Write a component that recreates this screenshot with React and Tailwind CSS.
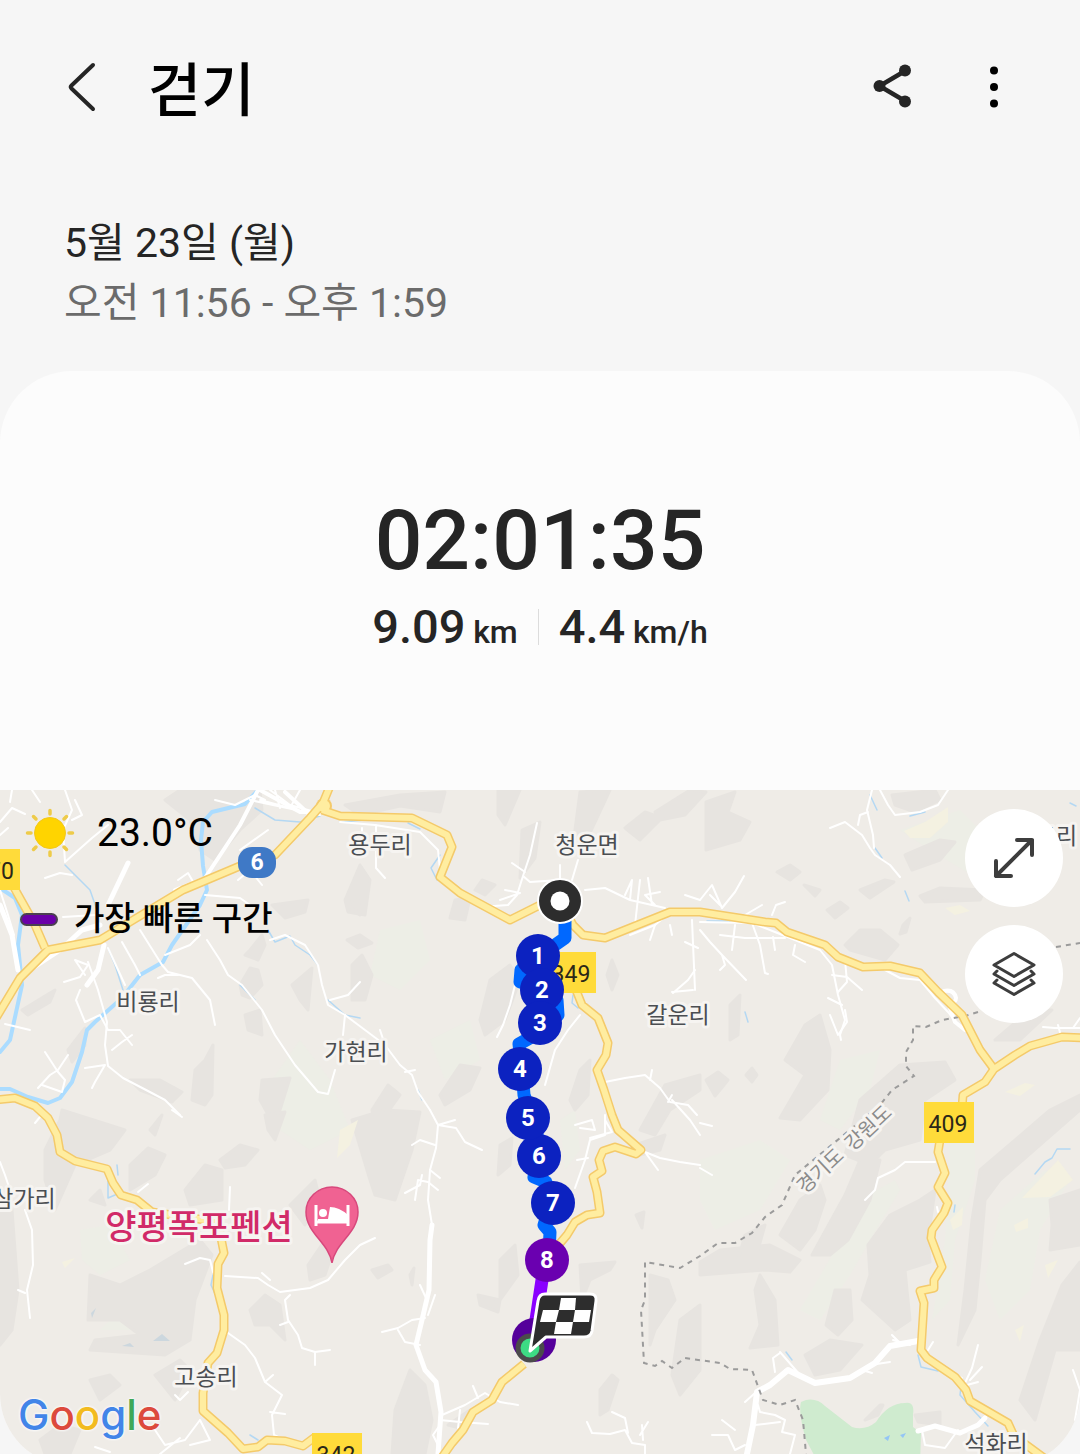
import React from 'react';

const checkpoints = [
  { label: '8', x: 547, y: 1260, fill: '#6a00b0' },
  { label: '7', x: 553, y: 1203, fill: '#0c22c0' },
  { label: '6', x: 539, y: 1156, fill: '#0c22c0' },
  { label: '5', x: 528, y: 1118, fill: '#0c22c0' },
  { label: '4', x: 520, y: 1069, fill: '#0c22c0' },
  { label: '1', x: 538, y: 956, fill: '#0c22c0' },
  { label: '2', x: 542, y: 990, fill: '#0c22c0' },
  { label: '3', x: 540, y: 1023, fill: '#0c22c0' },
];

const villages = [
  { name: '용두리', x: 380, y: 853 },
  { name: '청운면', x: 587, y: 853 },
  { name: '비룡리', x: 148, y: 1010 },
  { name: '가현리', x: 356, y: 1060 },
  { name: '갈운리', x: 678, y: 1023 },
  { name: '삼가리', x: 24, y: 1207 },
  { name: '고송리', x: 206, y: 1385 },
  { name: '석화리', x: 996, y: 1452 },
  { name: '교리', x: 1056, y: 844 },
];

const shields = [
  { label: '70', x: -30, y: 849, tx: 1 },
  { label: '349', x: 546, y: 952, tx: 571 },
  { label: '409', x: 924, y: 1102, tx: 948 },
  { label: '342', x: 312, y: 1433, tx: 336 },
];

// Hill shading, darker side of the slopes
const hills = [
  'M165 800 L180 790 L260 790 L262 810 L240 830 L215 860 L200 850 L190 820 Z',
  'M345 805 L400 795 L445 792 L440 812 L400 806 L360 815 Z',
  'M498 790 L520 790 L505 825 L498 815 Z',
  'M522 830 L540 822 L535 858 L520 878 Z',
  'M580 792 L610 790 L582 850 L575 830 Z',
  'M625 828 L645 812 L662 818 L640 840 Z M655 812 L690 790 L706 792 L685 815 L660 820 Z',
  'M706 802 L735 792 L728 812 L750 822 L740 840 L706 850 Z',
  'M892 795 L935 790 L940 800 L915 812 L895 805 Z',
  'M905 855 L940 840 L955 842 L940 860 L912 870 Z M860 890 L885 880 L894 882 L870 898 Z',
  'M920 896 L940 888 L985 890 L980 900 L925 902 Z',
  'M845 945 L860 930 L880 930 L898 945 L885 960 L850 950 Z M903 925 L910 918 L906 932 L900 934 Z',
  'M777 872 L790 865 L800 872 L790 880 Z M827 910 L840 902 L848 908 L835 918 Z M804 885 L820 890 L815 896 Z',
  'M730 1005 L740 995 L738 1035 L730 1040 Z M785 1060 L805 1025 L820 1015 L830 1050 L828 1090 L800 1120 L780 1118 L805 1075 Z',
  'M706 1080 L718 1072 L728 1080 L715 1096 Z M746 1075 L752 1068 L757 1075 L752 1082 Z',
  'M845 1155 L860 1100 L900 1065 L945 1062 L955 1080 L925 1100 L920 1140 L885 1150 L870 1165 Z',
  'M995 1040 L1030 1010 L1052 1010 L1020 1040 Z M1050 1110 L1080 1095 L1080 1110 L1000 1180 L985 1200 L980 1260 L975 1310 L958 1345 L965 1290 L972 1220 L980 1170 Z',
  'M868 1245 L890 1215 L920 1200 L935 1190 L928 1240 L930 1262 L905 1270 L910 1320 L895 1330 L862 1300 L870 1275 Z',
  'M812 1255 L845 1195 L860 1160 L880 1160 L870 1200 L848 1240 L830 1255 Z',
  'M835 1290 L850 1290 L852 1320 L838 1335 L826 1325 Z M805 1355 L830 1340 L862 1345 L840 1370 L815 1375 Z',
  'M755 1290 L760 1275 L775 1300 L778 1345 L750 1348 L760 1325 Z M700 1262 L720 1250 L770 1245 L800 1260 L790 1272 L765 1270 L700 1275 Z',
  'M780 1235 L800 1200 L820 1185 L825 1200 L815 1230 L800 1250 Z M738 1260 L745 1235 L765 1225 L758 1250 Z',
  'M1050 1200 L1080 1190 L1080 1245 L1050 1250 L1052 1225 Z M1062 1285 L1080 1262 L1080 1350 L1055 1350 L1035 1420 L1020 1400 L1040 1340 Z',
  'M865 1420 L880 1405 L883 1405 L878 1415 Z M915 1415 L940 1412 L940 1425 L918 1422 Z',
  'M650 1275 L668 1280 L675 1300 L655 1330 L650 1345 Z M680 1320 L700 1305 L700 1370 L680 1395 L672 1375 Z',
  'M600 1390 L612 1375 L618 1380 L608 1410 L600 1415 Z M580 1265 L615 1262 L610 1270 L590 1280 L582 1300 Z',
  'M500 1260 L515 1245 L518 1275 L500 1300 Z M478 1295 L500 1300 L498 1312 L480 1305 Z M636 1215 L644 1212 L642 1228 Z',
  'M500 1145 L512 1138 L510 1165 L498 1175 Z M635 1145 L665 1135 L660 1150 L640 1155 Z',
  'M480 1020 L490 980 L510 965 L520 980 L505 1020 L485 1035 Z M440 1095 L460 1065 L480 1068 L470 1090 L445 1105 Z',
  'M345 900 L360 865 L370 880 L365 915 L348 912 Z M347 940 L360 935 L372 943 L358 948 Z M352 965 L362 955 L372 975 L365 1000 L352 1000 Z',
  'M570 1100 L580 1070 L590 1060 L588 1095 L575 1110 Z M607 975 L612 960 L618 975 L612 990 Z M475 890 L482 880 L495 885 L485 895 Z',
  'M455 900 L470 898 L465 920 L450 918 Z M372 1110 L388 1085 L400 1095 L375 1130 Z',
  'M640 1130 L665 1085 L700 1075 L700 1090 L670 1110 L655 1135 Z',
  'M250 950 L262 935 L265 945 L258 960 L245 955 Z M272 905 L308 900 L305 912 L285 918 Z M348 905 L358 895 L360 915 Z',
  'M240 985 L250 968 L258 970 L262 985 L250 998 L242 995 Z M292 985 L312 968 L308 1010 L300 1000 Z M245 1015 L260 1010 L262 1035 L248 1030 Z',
  'M205 1060 L213 1045 L212 1095 L205 1105 L192 1100 L195 1070 Z M262 1080 L290 1078 L280 1110 L270 1118 L260 1100 Z',
  'M22 1010 L55 990 L50 1002 L28 1015 Z M68 1050 L85 1028 L85 1045 L72 1062 Z M130 1080 L160 1080 L182 1092 L172 1102 L140 1090 Z',
  'M45 1150 L60 1120 L62 1110 L125 1130 L110 1150 L75 1165 L55 1210 L45 1180 Z',
  'M130 1165 L148 1148 L165 1155 L155 1175 L130 1190 Z M185 1190 L205 1165 L222 1170 L222 1200 L190 1205 Z M150 1130 L162 1115 L155 1135 Z',
  'M220 1160 L240 1145 L258 1150 L245 1165 L225 1168 Z M265 1115 L285 1112 L275 1140 L268 1130 Z M290 1205 L315 1180 L320 1200 L305 1225 Z',
  'M88 1320 L90 1275 L120 1285 L150 1270 L200 1240 L212 1255 L195 1300 L190 1340 L165 1355 L90 1350 L95 1340 L140 1335 L120 1320 Z',
  'M0 1195 L12 1210 L18 1290 L12 1330 L0 1345 Z M90 1380 L110 1375 L120 1385 L100 1400 Z M155 1375 L180 1360 L190 1370 L175 1400 Z',
  'M250 1310 L265 1295 L280 1305 L285 1340 L270 1325 L255 1325 Z M308 1265 L325 1240 L335 1245 L325 1275 L310 1280 Z',
  'M370 1180 L352 1120 L385 1110 L420 1112 L412 1150 L395 1200 L375 1195 Z M372 1270 L388 1265 L392 1270 L378 1278 Z',
  'M395 1410 L410 1370 L425 1385 L432 1420 L425 1454 L392 1454 Z M410 1275 L414 1268 L412 1285 Z M448 1425 L470 1410 L460 1428 Z',
  'M40 1440 L60 1425 L80 1430 L70 1454 L45 1454 Z M90 1200 L100 1190 L105 1205 Z',
];

// Open ground between the hills
const meadows = [
  'M380 930 L420 920 L430 960 L400 990 L370 975 Z',
  'M430 1040 L470 1020 L480 1060 L445 1080 Z',
  'M265 1090 L300 1040 L330 1080 L350 1130 L310 1150 L280 1130 Z',
  'M100 1330 L130 1300 L190 1270 L175 1310 L140 1330 Z',
  'M80 1230 L110 1225 L130 1260 L100 1275 L82 1260 Z',
  'M700 1160 L760 1140 L790 1160 L760 1210 L715 1230 L700 1200 Z',
  'M835 1250 L860 1200 L895 1180 L900 1190 L870 1240 L850 1275 L820 1320 L800 1310 Z',
  'M1000 1210 L1045 1170 L1070 1180 L1040 1230 L1030 1290 L1000 1320 L985 1280 Z',
  'M900 830 L960 810 L1000 850 L980 880 L930 850 Z',
  'M820 1120 L840 1060 L880 1050 L870 1090 L840 1130 Z',
  'M950 1140 L975 1130 L975 1180 L955 1240 L950 1300 L932 1320 L945 1240 Z',
  'M560 1120 L575 1110 L580 1150 L565 1170 Z',
];

const fields = [
  'M904 831 L925 822 L948 807 L948 822 L930 838 L910 838 Z',
  'M945 908 L960 905 L970 911 L955 915 Z',
  'M1022 1198 L1058 1160 L1073 1180 L1050 1197 Z',
  'M1005 1092 L1025 1083 L1035 1085 L1020 1096 Z',
  'M1014 1225 L1028 1218 L1028 1228 L1016 1232 Z M1045 1265 L1058 1260 L1048 1278 Z M1015 1330 L1024 1325 L1020 1342 Z',
  'M950 1220 L963 1207 L962 1225 L953 1230 Z M340 1130 L358 1120 L350 1145 L337 1158 Z M62 1262 L75 1258 L65 1268 Z',
];

const rivers = [
  'M258 790 L245 804 L212 812 L203 822 L201 840 L203 866 L207 890 L200 905 L172 945 L163 962 L140 975 L122 998 L95 1022 L87 1030 L82 1052 L72 1082 L60 1098 L48 1103 L28 1097 L10 1089 L0 1089',
  'M0 888 L15 898 L22 915 L18 945 L22 985 L10 1040 L0 1052',
];

const streams = [
  'M255 808 L275 820 L300 822 L320 816 M340 822 L365 820',
  'M65 865 L90 890 L97 910 M108 948 L115 965 L123 990',
  'M268 930 L275 942 L290 936 L295 945 L310 955 L318 965',
  'M240 985 L255 1000 M328 1000 L345 1015 L360 1018',
  'M408 823 L420 829 M440 855 L431 868 L437 880',
  'M870 795 L877 810 M875 848 L882 858 M905 891 L909 901 M910 816 L925 812 M1070 803 L1076 806',
  'M707 921 L730 921 M745 1012 L748 1022 M573 995 L572 1003 L578 1008',
  'M1035 1174 L1045 1162 L1052 1158 L1057 1149 L1070 1149 M955 1205 L954 1212',
  'M918 1355 L921 1367 L938 1371 M962 1378 L960 1395 L975 1412 L988 1426 M786 1352 L792 1360',
  'M108 1180 L108 1198 L122 1192 L128 1195 M117 1165 L118 1175 M213 1275 L211 1285 L217 1298',
  'M418 1090 L422 1100 M250 1435 L258 1440',
];

// Local roads
const lanes = [
  'M65 790 L72 810 L63 830 L65 862 M65 862 L92 838 L108 825 M75 800 L82 815 L72 820 M0 835 L8 828 M0 822 L12 808 L25 814 M12 790 L10 802',
  'M45 878 L60 873 L72 875 M32 790 L40 802 M95 915 L63 917 M0 890 L8 915 L14 935',
  'M88 962 L98 990 L107 1022 L105 1045 L108 1066 L123 1078 L148 1091 L165 1100 L180 1115',
  'M64 982 L80 977 L88 965 L75 960 L85 975 M80 990 L76 1000 L85 1022 L100 1015 L108 1030 L120 1030 L132 1045 M112 1050 L122 1042 L132 1035',
  'M108 948 L125 985 M122 942 L135 965 L140 975 M140 930 L162 965 L168 972 L192 978 L210 1000 L215 1025',
  'M158 978 L165 975 L178 975 M45 1052 L58 1072 L65 1080 L62 1092 L42 1085 M38 1088 L50 1075 L58 1070 L68 1055',
  'M85 1068 L105 1065 L95 1082 L92 1088 M30 1030 L5 1024',
  'M165 955 L190 945 L200 935 M207 940 L220 960 L228 975 L242 985 L262 1010 L275 1035 L295 1065 L318 1092 L328 1094 L335 1070',
  'M178 880 L188 873 L195 885 M205 895 L240 898 L250 905 M238 880 L250 870 L262 885 M240 850 L268 830',
  'M270 940 L285 935 L305 945 L318 965 L322 985 L328 1005 L345 1015 L365 1030 L385 1045 L400 1065 L412 1075 L418 1092 L430 1110',
  'M345 1015 L343 1035 M330 1000 L348 995 L360 982 M385 1045 L380 1030 M405 1072 L415 1070',
  'M215 800 L235 805 L255 795 L265 800 M270 790 L290 805 L315 812 M260 800 L290 808 L300 790 M275 790 L280 808 M250 800 L320 815',
  'M340 822 L375 825 L420 832 L438 850 L440 870 M376 825 L376 868 L385 878 M362 840 L362 828',
  'M537 823 L530 855 L523 876 L530 882 L560 880 M512 863 L525 872 M523 876 L517 895 L508 905 L480 907 M505 890 L520 893 L500 900 M560 880 L560 865 M572 880 L578 860',
  'M585 890 L605 888 L630 900 L665 908 M630 900 L632 880 L625 895 M640 880 L635 925 M648 878 L652 905 M655 905 L645 895 L660 892 M685 895 L700 900',
  'M700 900 L712 885 L722 908 L735 892 L744 876 M720 905 L710 895 M745 915 L762 905 M772 915 L776 905 L785 902 M667 915 L655 925 L650 940',
  'M655 925 L630 935 M670 925 L672 935 M692 920 L695 990 M685 942 L698 948 M700 922 L752 923 L785 936 L820 950 L832 965 L838 995 L845 1020 L840 1035 L841 1040',
  'M752 923 L760 945 L765 973 L768 974 M735 925 L732 950 M720 935 L745 938 L785 938 M773 937 L775 950 M795 945 L793 955 L805 962',
  'M700 930 L710 942 L722 955 L725 965 L720 970 M722 955 L746 980 M832 975 L847 977 L862 990 M845 960 L847 982 L838 992 M842 1005 L828 998 M845 1010 L847 1022 L838 1035 L830 1015',
  'M830 828 L845 822 L862 835 L870 848 L875 855 L890 865 L900 877 M872 790 L867 810 L873 835 L874 848 M858 825 L860 815 L868 812',
  'M880 790 L888 805 L895 815 L920 812 L938 805 L948 790',
  'M885 970 L900 978 L920 980 L935 998 L948 1012 L958 1025 L975 1035',
  'M515 985 L510 1005 L503 1025 L497 1037 M580 1015 L568 1030 L555 1050 L545 1085 M693 990 L672 992 M695 970 L688 980 L673 993',
  'M605 1082 L625 1078 L645 1075 L660 1088 L670 1102 L688 1105 L697 1115 M668 1102 L672 1095 M650 1080 L652 1070',
  'M645 1152 L660 1158 L680 1162 L700 1165 M645 1152 L658 1170 M672 1100 L690 1120 L700 1135 M605 1115 L605 1135 L590 1140 L585 1160 L575 1188',
  'M575 1125 L592 1120 L595 1130 L580 1128 M605 1120 L612 1132 L590 1138 M577 1160 L588 1158',
  'M430 1110 L438 1125 L455 1120 M438 1125 L456 1128 L465 1142 L482 1150 M438 1125 L436 1148 L430 1170 L428 1200 L432 1225 M435 1145 L420 1140 L412 1145',
  'M405 1193 L420 1185 L422 1175 M415 1200 L418 1180 L428 1182 L438 1190 M430 1170 L440 1178 M382 1332 L398 1328 L412 1320 L425 1318 M420 1345 L405 1342 L398 1330 M428 1315 L435 1295 M420 1285 L426 1298',
  'M442 1415 L465 1405 L485 1393 L500 1402 L518 1405 M478 1398 L473 1386 M440 1420 L460 1422 L488 1424 M460 1410 L458 1428 M440 1425 L433 1435 L438 1445',
  'M0 1162 L5 1175 L10 1190 M25 1210 L32 1230 L33 1265 L27 1290 L30 1318 M25 1293 L18 1290',
  'M185 1264 L200 1258 L210 1260 L213 1272 M225 1276 L258 1278 L268 1285 L280 1292 L310 1288 L328 1280 L345 1260 L360 1245 L375 1238 M262 1273 L270 1280',
  'M290 1295 L285 1300 L288 1320 L298 1335 L302 1348 L315 1352 L315 1365 M315 1352 L330 1350 M280 1325 L288 1322 M228 1333 L245 1345 L255 1358 L265 1382 L282 1395 L272 1415 L274 1435 L295 1445 M270 1412 L285 1414 M265 1382 L273 1375',
  'M175 1395 L180 1400 L188 1392 M200 1420 L185 1440 L165 1445 L155 1430 M200 1420 L210 1440 L190 1445 M95 1447 L110 1452 M160 1454 L180 1438',
  'M230 1187 L229 1210 M138 1192 L148 1184 M172 1110 L182 1117 M35 1123 L40 1117',
  'M935 1162 L905 1162 L895 1170 L878 1178 L875 1190 L865 1200 M937 1207 L938 1212 M910 1345 L893 1340 M902 1345 L892 1335 M928 1350 L933 1342',
  'M965 1383 L972 1368 L978 1345 M970 1380 L982 1367 M967 1385 L978 1382 M948 1372 L962 1378 M775 1372 L773 1358 L780 1353 M785 1370 L800 1375 L780 1352',
  'M745 1402 L755 1393 M758 1405 L760 1412 L775 1415 L785 1420 L782 1432 L795 1435 L790 1454 M755 1425 L780 1422 M712 1435 L728 1435 L735 1450 L745 1445 M722 1420 L735 1430',
  'M870 1365 L890 1362 M862 1370 L872 1373 M587 1422 L592 1433 L610 1434 L625 1430 L632 1443 L645 1445 L645 1454 M628 1433 L625 1418 L612 1412 M640 1435 L648 1422 M643 1440 L642 1425',
  'M1043 1027 L1055 1028 L1080 1028 M1058 1025 L1062 1040 M1073 1028 L1080 1018 M700 1123 L712 1126 M700 1168 L712 1175 M1073 1370 L1080 1390 L1075 1420',
  'M922 1430 L925 1445 L945 1448 L958 1430',
];

const streets = [
  { d: 'M258 790 L240 825 L205 878 L175 890', w: 4 },
  { d: 'M128 863 L108 905 M100 925 L82 930 L60 950 L22 975', w: 5 },
  { d: 'M0 905 L12 935 L18 970', w: 5 },
  { d: 'M104 945 L98 970 L87 985', w: 5 },
  { d: 'M260 790 L300 812 L320 812 M285 792 L310 815', w: 4 },
  { d: 'M432 1225 L430 1240 L429 1290 L422 1320 L416 1345 L425 1370 L436 1382 L441 1412 L438 1454', w: 5 },
  { d: 'M918 1341 L890 1346 L875 1363 L850 1378 L815 1383 L788 1370 L770 1385 L757 1392 L753 1425 L747 1454', w: 6 },
  { d: 'M918 1431 L935 1426 L960 1433 L978 1425 L985 1418', w: 5 },
  { d: 'M944 991 Q954 989 956 998 Q956 1003 950 1002 M950 1008 L955 1022 L965 1030', w: 4 },
];

const highways = [
  'M-4 1018 L20 978 L48 950 L100 940 L183 890 L240 866 L275 855 L310 818 L323 803 L330 786',
  'M5 870 L17 893 L35 925 L45 948',
  'M322 810 L340 816 L412 818 L447 835 L452 847 L440 877 L460 893 L510 920 L540 905 L562 905 L573 925 L583 935 L605 938 L670 912 L700 912 L765 922 L776 923 L787 932 L825 945 L838 957 L863 967 L890 966 L920 973 L938 992 L962 1015 L980 1050 L994 1069',
  'M1084 1038 L1062 1037 L1030 1046 L1015 1055 L994 1069 L985 1082 L963 1095 L962 1108',
  'M940 1140 L938 1152 L945 1173 L938 1187 L948 1203 L944 1213 L932 1230 L931 1238 L942 1267 L934 1280 L934 1288 L920 1291 L924 1303 L921 1350 L927 1358 L955 1377 L966 1390 L970 1401 L1008 1423 L1014 1436 L1044 1458',
  'M-4 1100 L15 1098 L35 1106 L48 1118 L57 1135 L60 1152 L75 1161 L107 1169 L113 1183 L121 1195 L137 1200 L152 1212 L218 1222 L222 1243 L224 1253 L218 1264 L217 1288 L224 1315 L224 1330 L217 1353 L208 1363 L203 1393 L203 1411 L228 1433 L243 1449 L258 1447 L267 1440 L285 1441 L303 1446 L315 1437',
  'M576 990 L582 1005 L598 1018 L608 1043 L606 1055 L597 1070 L604 1090 L612 1115 L618 1130 L641 1150 L636 1154 L615 1147 L603 1151 L599 1160 L602 1171 L593 1177 L597 1192 L600 1213 L587 1215 L575 1222 L567 1235 L550 1255',
  'M524 1364 L502 1382 L492 1400 L473 1412 L463 1430 L452 1443 L440 1460',
];

const borders = [
  'M1056 947 L1080 943 M978 1012 L965 1016 L942 1020 L926 1027 L913 1026 L913 1040 L906 1052 L906 1066 L914 1076 L892 1090 L880 1105 L868 1115 L795 1175 L782 1205 L765 1217 L752 1233 L735 1243 L718 1243 L700 1256 L680 1268 L645 1262 L645 1300 L641 1310 L644 1363 L655 1366 L662 1361 L672 1368 L685 1358 L720 1363 L730 1369 L752 1370 L763 1400 L780 1405 L795 1400 L803 1420 L806 1454',
];

function ActivityMap() {
  return (
    <svg viewBox="0 790 1080 676" className="block w-full" role="img" aria-label="걷기 경로">
      <rect x="0" y="790" width="1080" height="676" fill="#efece7" />
      <g fill="#edeee6">
        {meadows.map((d) => <path key={d} d={d} />)}
      </g>
      <g fill="#e7e4e0" stroke="#e7e4e0" strokeWidth="3" strokeLinejoin="round">
        {hills.map((d) => <path key={d} d={d} />)}
      </g>
      <g fill="#f4f1e1">
        {fields.map((d) => <path key={d} d={d} />)}
      </g>
      <path
        d="M806 1400 Q817 1398 825 1406 L852 1427 Q865 1431 876 1422 Q888 1403 905 1403 Q915 1401 913 1415 L913 1427 L921 1433 L920 1466 L820 1466 L806 1440 Q798 1412 801 1402 Z"
        fill="#cfebcf"
      />
      <path d="M884 1438 L890 1435 L888 1441 Z M900 1435 L906 1433 L903 1438 Z" fill="#94c5f5" />
      <path d="M153 1341 L162 1334 L170 1341 Z M122 1346 L130 1343 L134 1347 Z M91 1313 L96 1308 L92 1318 Z" fill="#ccd7de" />

      <g fill="none" stroke="#abdcff" strokeLinejoin="round" strokeLinecap="round">
        {rivers.map((d) => <path key={d} d={d} strokeWidth="4" />)}
        {streams.map((d) => <path key={d} d={d} strokeWidth="1.5" stroke="#b4d8f3" />)}
      </g>
      <g fill="none" stroke="#ffffff" strokeLinejoin="round" strokeLinecap="round">
        {lanes.map((d) => <path key={d} d={d} strokeWidth="2" />)}
        {streets.map((s) => <path key={s.d} d={s.d} strokeWidth={s.w} />)}
      </g>
      <g fill="none" stroke="#9b9b9b" strokeWidth="2" strokeDasharray="5 5">
        {borders.map((d) => <path key={d} d={d} />)}
      </g>
      <g fill="none" strokeLinejoin="round">
        {highways.map((d) => <path key={d} d={d} stroke="#f4ca6a" strokeWidth="9" />)}
        <circle cx="324" cy="806" r="8" fill="#f4ca6a" />
        {highways.map((d) => <path key={d} d={d} stroke="#ffeda0" strokeWidth="6" />)}
        <circle cx="324" cy="806" r="6" fill="#ffeda0" />
      </g>

      {/* Route shields */}
      <g fontFamily="Roboto, sans-serif" fontSize="23" textAnchor="middle">
        {shields.map((s) => (
          <g key={s.label}>
            <rect x={s.x} y={s.y} width="50" height="41" fill="#ffdb3a" />
            <text x={s.tx} y={s.y + 30} fill="#2b2718">{s.label}</text>
          </g>
        ))}
        <rect x="238" y="847" width="38" height="31" rx="14" fill="#3f79c6" />
        <text x="257" y="870" fill="#ffffff" fontWeight="700">6</text>
      </g>

      <g
        fontFamily="'Noto Sans CJK KR', sans-serif"
        fontSize="23"
        textAnchor="middle"
        fill="#4b4e52"
        stroke="#f6f4f1"
        strokeWidth="6"
        strokeLinejoin="round"
        paintOrder="stroke"
      >
        {villages.map((v) => <text key={v.name} x={v.x} y={v.y}>{v.name}</text>)}
        <g fontSize="20" fill="#8b8b8b">
          <text transform="translate(825 1176) rotate(-43)">경기도</text>
          <text transform="translate(873 1133) rotate(-43)">강원도</text>
        </g>
        <text x="199" y="1239" fontSize="34" fontWeight="500" fill="#d12a68">양평폭포펜션</text>
      </g>

      {/* Lodging pin */}
      <path d="M332 1263 C329 1243 306 1233 306 1212 A26 25 0 0 1 358 1212 C358 1233 335 1243 332 1263 Z" fill="#f06292" stroke="#d8487c" strokeWidth="1.5" />
      <path d="M316 1205 V1226 M316 1222 H349 M348 1205 V1226" stroke="#ffffff" strokeWidth="3" />
      <circle cx="323" cy="1213" r="4" fill="#ffffff" />
      <path d="M328 1219 L330 1207 Q339 1207 348 1215 V1222 H318 V1219 Z" fill="#ffffff" />

      {/* Walked path */}
      <g fill="none" strokeLinejoin="round" strokeWidth="13">
        <path
          d="M565 920 L565 938 L545 952 L521 970 L520 982 L545 985 L557 1000 L558 1015 L535 1035 L519 1044 L522 1070 L524 1095 L535 1125 L540 1150 L534 1177 L546 1182 L550 1205 L544 1225 L550 1232 L549 1255"
          stroke="#0068ff"
        />
        <path d="M545 1260 L536 1320" stroke="#8a00ff" />
      </g>
      <circle cx="534" cy="1340" r="22" fill="#55009b" />

      {checkpoints.map((c) => (
        <g key={c.label}>
          <circle cx={c.x} cy={c.y} r="22" fill={c.fill} />
          <text
            x={c.x}
            y={c.y + 8}
            textAnchor="middle"
            fontFamily="Roboto, sans-serif"
            fontSize="24"
            fontWeight="700"
            fill="#ffffff"
          >
            {c.label}
          </text>
        </g>
      ))}

      {/* Start */}
      <circle cx="560" cy="901" r="22" fill="#2d2d2d" stroke="#ffffff" strokeWidth="2" />
      <circle cx="560" cy="901" r="9.500" fill="#ffffff" />

      {/* Finish */}
      <circle cx="530" cy="1348" r="12" fill="#3ddc84" stroke="#4b4b4b" strokeWidth="5" />
      <path
        d="M545 1294 H590 Q597 1294 596 1301 L592 1331 Q591 1337 584 1337 H546 L530 1351 L538 1301 Q539 1294 545 1294 Z"
        fill="#2d2d2d"
        stroke="#ffffff"
        strokeWidth="3"
        strokeLinejoin="round"
      />
      <g fill="#ffffff">
        <path d="M561 1298 H576 L575 1310 H559 Z" />
        <path d="M543 1310 H559 L556 1322 H540 Z" />
        <path d="M575 1310 H591 L589 1322 H573 Z" />
        <path d="M556 1322 H573 L571 1334 H554 Z" />
      </g>
    </svg>
  );
}

function SunIcon() {
  return (
    <svg viewBox="0 0 50 50" className="w-[50px] h-[50px]" aria-hidden="true">
      <circle cx="25" cy="25" r="15.500" fill="#ffd400" stroke="#f3c71a" />
      <g stroke="#eecb4a" strokeWidth="3.500" strokeLinecap="round">
        <path d="M25 2.500 V6 M25 44 V47.500 M2.500 25 H6 M44 25 H47.500" />
        <path d="M8.500 8.500 L11 11 M39 39 L41.500 41.500 M8.500 41.500 L11 39 M39 11 L41.500 8.500" />
      </g>
    </svg>
  );
}

function GoogleLogo() {
  return (
    <a
      href="#google"
      aria-label="Google"
      className="absolute left-[18px] bottom-[21px] font-['Inter',sans-serif] text-[42px] leading-[60px] font-medium [text-shadow:0_0_3px_#fff,0_0_3px_#fff]"
    >
      <span className="text-[#4285e8]">G</span>
      <span className="text-[#dc4a3d]">o</span>
      <span className="text-[#f2bb20]">o</span>
      <span className="text-[#4285e8]">g</span>
      <span className="text-[#3fa757]">l</span>
      <span className="text-[#dc4a3d]">e</span>
    </a>
  );
}

export default function App() {
  return (
    <main className="h-screen overflow-y-auto [scrollbar-width:none] bg-[#f6f6f6] text-[#252525] font-['Roboto','Noto_Sans_CJK_KR',sans-serif]">
      <header className="flex items-center h-[174px] pl-14 pr-15">
        <button aria-label="뒤로" className="w-[52px] h-16 flex items-center justify-center">
          <svg viewBox="0 0 52 64" className="w-[52px] h-16" fill="none" stroke="#252525" strokeWidth="4" strokeLinecap="round" strokeLinejoin="round">
            <path d="M37 10 L15.500 30.500 Q14 32 15.500 33.500 L37 54" />
          </svg>
        </button>
        <h1 className="ml-10 pt-2 text-[58px] leading-[72px] font-medium text-black">걷기</h1>
        <button aria-label="공유" className="ml-auto w-16 h-16 flex items-center justify-center">
          <svg viewBox="0 0 48 48" className="w-12 h-12" fill="#252525" stroke="#252525" strokeWidth="4.500">
            <path d="M37 8 L11.500 23 L37 38" fill="none" />
            <circle cx="11.500" cy="23" r="6" stroke="none" />
            <circle cx="37" cy="7.500" r="6" stroke="none" />
            <circle cx="37" cy="38.500" r="6" stroke="none" />
          </svg>
        </button>
        <button aria-label="옵션 더보기" className="ml-12 w-12 h-16 flex items-center justify-center">
          <svg viewBox="0 0 48 48" className="w-12 h-12" fill="#000000">
            <circle cx="22" cy="7.500" r="4" />
            <circle cx="22" cy="24" r="4" />
            <circle cx="22" cy="40.500" r="4" />
          </svg>
        </button>
      </header>

      <section className="px-16 pt-[39px] pb-[38px] text-[41px] leading-[60px]">
        <p>5월 23일 (월)</p>
        <p className="text-[#6b6b6b]">오전 11:56 - 오후 1:59</p>
      </section>

      <article className="rounded-[72px] overflow-hidden bg-[#fcfcfc]">
        <div className="flex flex-col items-center pt-[122px] pb-[131px] font-medium">
          <p className="text-[84px] leading-[96px]">02:01:35</p>
          <div className="mt-1.5 flex items-center">
            <p className="text-[47px] leading-[64px]">
              9.09 <span className="-ml-1 text-[32px] leading-none">km</span>
            </p>
            <span className="mx-5 w-px h-9 bg-[#dcdcdc]" />
            <p className="text-[47px] leading-[64px]">
              4.4 <span className="-ml-1 text-[32px] leading-none">km/h</span>
            </p>
          </div>
        </div>

        <div className="relative">
          <ActivityMap />

          <div className="absolute left-5 top-4 text-black">
            <div className="flex items-center gap-[22px] pl-[5px]">
              <SunIcon />
              <span className="text-[39px] leading-[54px]">23.0°C</span>
            </div>
            <div className="mt-8 flex items-center gap-4">
              <span className="w-[38px] h-[13px] rounded-full bg-[#6a00a8] border-2 border-[#4b4150]" />
              <span className="text-[33px] leading-[54px] font-medium">가장 빠른 구간</span>
            </div>
          </div>

          <div className="absolute right-[17px] top-[19px] flex flex-col gap-[18px]">
            <button aria-label="지도 확대" className="w-[98px] h-[98px] rounded-full bg-white flex items-center justify-center">
              <svg viewBox="0 0 48 48" className="w-12 h-12" fill="none" stroke="#3d3d3d" strokeWidth="4" strokeLinecap="round" strokeLinejoin="round">
                <path d="M6 42 L42 6 M27 6 H42 V21 M6 27 V42 H21" />
              </svg>
            </button>
            <button aria-label="지도 유형" className="w-[98px] h-[98px] rounded-full bg-white flex items-center justify-center">
              <svg viewBox="0 0 48 48" className="w-12 h-12" fill="none" stroke="#3d3d3d" strokeWidth="3" strokeLinecap="round" strokeLinejoin="round">
                <path d="M24 3.500 L44 15 L24 26.500 L4 15 Z" />
                <path d="M7 21 L4 24 L24 35.500 L44 24 L41 21" />
                <path d="M7 30 L4 33 L24 44.500 L44 33 L41 30" />
              </svg>
            </button>
          </div>

          <GoogleLogo />
        </div>
      </article>
    </main>
  );
}
